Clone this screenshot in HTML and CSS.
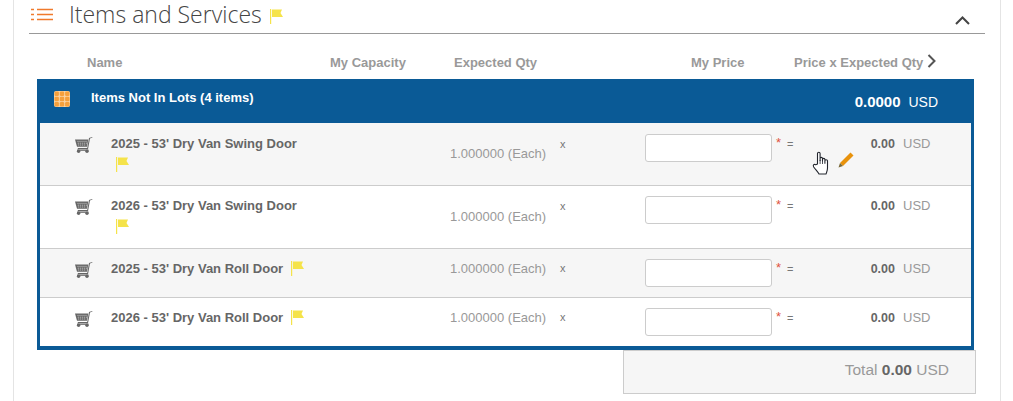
FILE: index.html
```html
<!DOCTYPE html>
<html lang="en">
<head>
    <meta charset="UTF-8">
    <title>Items and Services</title>
    <link rel="stylesheet" href="styles.css">
</head>
<body>
    <svg class="defs" width="0" height="0">
        <symbol id="flag" viewBox="0 0 13 16">
            <rect x="0" y="0" width="1.2" height="15" fill="#f5e34a"/>
            <path d="M2 0.5H12L10.5 4L13 8H2Z" fill="#f5e34a"/>
        </symbol>
        <symbol id="cart" viewBox="0 0 18 16">
            <path d="M0 2.5H13.2L12 9.8H2Z" fill="#666"/>
            <path d="M12.2 11H2.8V12.2H13L15 1.6L17.5 0.6L17.2 0L14 1Z" fill="#666"/>
            <path d="M2.5 4.4H12M2.8 6.2H11.8M3.2 8H11.4" stroke="#f5f5f5" stroke-width="0.7" stroke-dasharray="1 1"/>
            <rect x="2" y="12.6" width="11.5" height="1.2" fill="#666"/>
            <circle cx="3.6" cy="14.2" r="1.7" fill="#666"/>
            <circle cx="12" cy="14.2" r="1.7" fill="#666"/>
        </symbol>
    </svg>

    <div class="panel">
        <div class="section-head">
            <svg class="list-icon" width="22" height="13" viewBox="0 0 22 13">
                <path d="M0 1.5H3M6 1.5H22M0 6.5H3M6 6.5H22M0 11.5H3M6 11.5H22" stroke="#f07a2c" stroke-width="1.6"/>
            </svg>
            <h2 class="section-title">Items and Services</h2>
            <svg class="flag" width="13" height="16"><use href="#flag"/></svg>
            <svg class="collapse" width="15" height="9" viewBox="0 0 15 9">
                <path d="M1 8L7.5 1.5L14 8" fill="none" stroke="#444" stroke-width="2"/>
            </svg>
        </div>

        <div class="columns">
            <span class="col-name">Name</span>
            <span class="col-capacity">My Capacity</span>
            <span class="col-qty">Expected Qty</span>
            <span class="col-price">My Price</span>
            <span class="col-total">Price x Expected Qty</span>
            <svg class="col-next" width="9" height="14" viewBox="0 0 9 14">
                <path d="M1.5 1L7.5 7L1.5 13" fill="none" stroke="#555" stroke-width="2"/>
            </svg>
        </div>

        <div class="lot">
            <div class="lot-head">
                <svg class="grid-icon" width="16" height="16" viewBox="0 0 16 16">
                    <rect width="16" height="16" rx="2" fill="#fbd3a2"/>
                    <g fill="#f6a03c">
                        <rect x="0.5" y="0.5" width="4.4" height="4.4" rx="1.2"/>
                        <rect x="5.8" y="0.5" width="4.4" height="4.4" rx="1.2"/>
                        <rect x="11.1" y="0.5" width="4.4" height="4.4" rx="1.2"/>
                        <rect x="0.5" y="5.8" width="4.4" height="4.4" rx="1.2"/>
                        <rect x="5.8" y="5.8" width="4.4" height="4.4" rx="1.2"/>
                        <rect x="11.1" y="5.8" width="4.4" height="4.4" rx="1.2"/>
                        <rect x="0.5" y="11.1" width="4.4" height="4.4" rx="1.2"/>
                        <rect x="5.8" y="11.1" width="4.4" height="4.4" rx="1.2"/>
                        <rect x="11.1" y="11.1" width="4.4" height="4.4" rx="1.2"/>
                    </g>
                </svg>
                <span class="lot-name">Items Not In Lots (4 items)</span>
                <span class="lot-total"><b>0.0000</b> USD</span>
            </div>

            <div class="row row-tall row-first alt">
                <svg class="cart" width="18" height="16"><use href="#cart"/></svg>
                <div class="item">
                    <span class="item-name">2025 - 53' Dry Van Swing Door</span>
                    <svg class="flag below" width="13" height="16"><use href="#flag"/></svg>
                </div>
                <span class="qty qty-low">1.000000 (Each)</span>
                <span class="times">x</span>
                <input class="price" type="text">
                <span class="req">*</span>
                <span class="eq">=</span>
                <span class="amount">0.00</span>
                <span class="cur">USD</span>
                <svg class="pencil" width="16" height="16" viewBox="0 0 16 16">
                    <path d="M12.5 0.5L15.5 3.5L5 14L2 11Z" fill="#e8920c"/>
                    <path d="M2 11L5 14L0.5 15.5Z" fill="#7a6a3a"/>
                </svg>
                <svg class="hand" width="19" height="24" viewBox="0 0 18 24">
                    <path d="M5 13V2.5C5 0.8 7.6 0.8 7.6 2.5V9.5V7.5C7.6 6 10 6 10 7.5V10V8.5C10 7 12.4 7 12.4 8.5V11V9.8C12.4 8.4 15 8.4 15 9.8V17C15 20 14 21.5 13.5 23H6.5C5.5 21 3 18.5 1.2 16C0 14 1.8 12.6 3.2 13.8Z" fill="#fff" stroke="#23262e" stroke-width="1.1" stroke-linejoin="round"/>
                    <path d="M7.6 9V13M10 10V13M12.4 11V13" stroke="#23262e" stroke-width="0.8"/>
                </svg>
            </div>

            <div class="row row-tall row-two">
                <svg class="cart" width="18" height="16"><use href="#cart"/></svg>
                <div class="item">
                    <span class="item-name">2026 - 53' Dry Van Swing Door</span>
                    <svg class="flag below" width="13" height="16"><use href="#flag"/></svg>
                </div>
                <span class="qty qty-low">1.000000 (Each)</span>
                <span class="times">x</span>
                <input class="price" type="text">
                <span class="req">*</span>
                <span class="eq">=</span>
                <span class="amount">0.00</span>
                <span class="cur">USD</span>
            </div>

            <div class="row alt">
                <svg class="cart" width="18" height="16"><use href="#cart"/></svg>
                <div class="item item-inline">
                    <span class="item-name">2025 - 53' Dry Van Roll Door</span>
                    <svg class="flag" width="13" height="16"><use href="#flag"/></svg>
                </div>
                <span class="qty">1.000000 (Each)</span>
                <span class="times">x</span>
                <input class="price" type="text">
                <span class="req">*</span>
                <span class="eq">=</span>
                <span class="amount">0.00</span>
                <span class="cur">USD</span>
            </div>

            <div class="row row-last">
                <svg class="cart" width="18" height="16"><use href="#cart"/></svg>
                <div class="item item-inline">
                    <span class="item-name">2026 - 53' Dry Van Roll Door</span>
                    <svg class="flag" width="13" height="16"><use href="#flag"/></svg>
                </div>
                <span class="qty">1.000000 (Each)</span>
                <span class="times">x</span>
                <input class="price" type="text">
                <span class="req">*</span>
                <span class="eq">=</span>
                <span class="amount">0.00</span>
                <span class="cur">USD</span>
            </div>
        </div>

        <div class="grand-total">Total <b>0.00</b> USD</div>
    </div>
</body>
</html>
```

FILE: styles.css
```css
html, body {
    margin: 0;
    padding: 0;
    height: 401px;
    overflow: hidden;
    background-color: #fff;
}
body {
    font-family: "Liberation Sans", Arial, sans-serif;
    font-size: 13px;
    color: #666;
}
.defs {
    position: absolute;
}
.panel {
    width: 988px;
    height: 401px;
    margin-left: 13px;
    padding-left: 15px;
    box-sizing: border-box;
    border-left: 1px solid #e4e4e4;
    border-right: 1px solid #e4e4e4;
}
.section-head {
    display: flex;
    align-items: center;
    height: 33px;
    width: 954px;
    padding-left: 2px;
    border-bottom: 1px solid #999;
}
.list-icon {
    margin-right: 16px;
    margin-bottom: 5px;
}
.section-title {
    margin: 0 8px 5px 0;
    font-family: "Open Sans", sans-serif;
    font-size: 23px;
    line-height: 24px;
    font-weight: 300;
    color: #444;
}
.collapse {
    margin-left: auto;
    margin-right: 15px;
    margin-top: 8px;
}
.columns {
    display: flex;
    align-items: center;
    height: 45px;
    padding-top: 11px;
    box-sizing: border-box;
    font-weight: bold;
    color: #999;
}
.col-name {
    margin-left: 58px;
    width: 243px;
}
.col-capacity {
    width: 124px;
}
.col-qty {
    width: 237px;
}
.col-price {
    width: 103px;
}
.col-next {
    margin-left: 4px;
    margin-bottom: 2px;
}
.lot {
    width: 937px;
    margin-left: 8px;
    box-sizing: border-box;
    border: 3px solid #0a5a96;
    border-bottom-width: 4px;
    border-top: 0;
}
.lot-head {
    display: flex;
    height: 44px;
    background-color: #0a5a96;
    color: #fff;
    box-sizing: border-box;
    padding: 11px 0 0 14px;
}
.grid-icon {
    margin: 1px 21px 0 0;
}
.lot-name {
    font-weight: bold;
}
.lot-total {
    margin-left: auto;
    margin-right: 33px;
    margin-top: 3px;
    font-size: 14px;
}
.lot-total b {
    font-size: 15px;
    margin-right: 4px;
}
.row {
    display: grid;
    grid-template-columns: 36px 339px 110px 85px 127px 11px 48px 64px 1fr;
    align-items: start;
    height: 49px;
    padding: 10px 0 0 35px;
    box-sizing: border-box;
    border-bottom: 1px solid #ccc;
    position: relative;
}
.row-tall {
    height: 63px;
}
.row-first {
    padding-top: 11px;
}
.row-last {
    border-bottom: 0;
    height: 48px;
}
.alt {
    background-color: #f6f6f6;
}
.cart {
    margin-top: 3px;
}
.item-name {
    font-weight: bold;
    display: block;
    margin-top: 2px;
}
.item {
    display: block;
}
.item-inline {
    display: flex;
}
.item-inline .flag {
    margin: 2px 0 0 8px;
}
.below {
    display: block;
    margin: 6px 0 0 5px;
}
.qty {
    color: #999;
    margin-top: 2px;
}
.qty-low {
    margin-top: 12px;
}
.row-two .qty-low {
    margin-top: 13px;
}
.times {
    font-size: 11px;
    color: #777;
    margin-top: 3px;
}
.row-tall .times {
    margin-top: 4px;
}
.price {
    width: 127px;
    height: 28px;
    box-sizing: border-box;
    border: 1px solid #ccc;
    border-radius: 3px;
    background-color: #fff;
    padding: 0;
}
.req {
    color: #e0533d;
    margin: 1px 0 0 4px;
}
.eq {
    font-size: 11px;
    color: #777;
    margin-top: 4px;
    margin-left: 4px;
}
.amount {
    font-weight: bold;
    font-size: 12.5px;
    text-align: right;
    margin-top: 3px;
}
.cur {
    font-size: 13px;
    color: #999;
    margin: 2px 0 0 8px;
}
.pencil {
    position: absolute;
    left: 798px;
    top: 29px;
}
.hand {
    position: absolute;
    left: 772px;
    top: 28px;
}
.grand-total {
    width: 353px;
    height: 44px;
    margin-left: 594px;
    box-sizing: border-box;
    border: 1px solid #ccc;
    background-color: #f6f6f6;
    text-align: right;
    padding: 10px 26px 0 0;
    font-size: 15.5px;
    color: #999;
}
.grand-total b {
    color: #666;
}
```
